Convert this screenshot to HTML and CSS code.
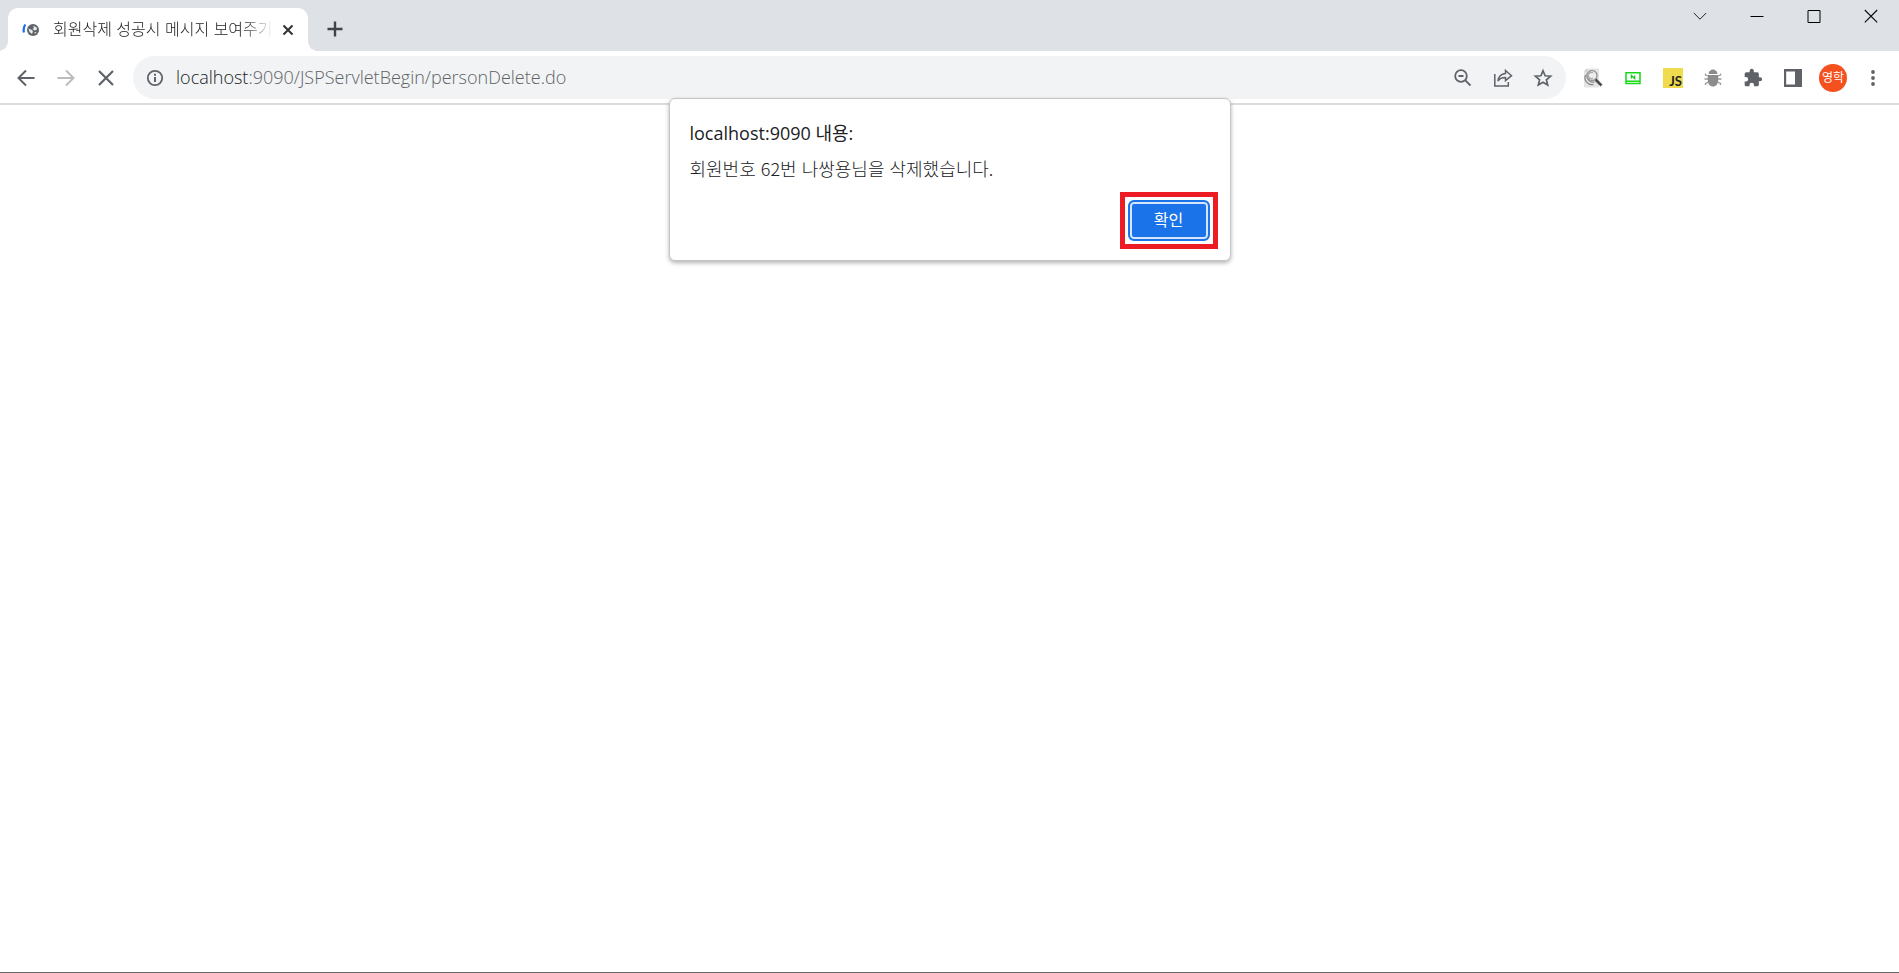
FILE: index.html
```
<!DOCTYPE html>
<html lang="ko">
<head>
<meta charset="utf-8">
<title>회원삭제 성공시 메시지 보여주기</title>
<link rel="stylesheet" href="styles.css">
</head>
<body>
<div class="browser">
  <header class="tab-strip">
    <div class="tab">
      <svg class="favicon" viewBox="0 0 18 14" aria-hidden="true">
        <path d="M3.300 1.500C1.600 4 1.300 6.500 1.900 9.500" fill="none" stroke="#1a6fe8" stroke-width="2.200"/>
        <circle cx="11" cy="7" r="6" fill="#5f6368"/>
        <path d="M6.500 5.500l3.500 1.500 1 1.500-1 2.500-2.500-2zM11 2.800l3.500 1.500.5 2.500-2.500.7-2-1.500 1.500-1zM12.500 9l2 .3-1.500 1.700z" fill="#e6e8ea"/>
      </svg>
      <span class="tab-title">회원삭제 성공시 메시지 보여주기</span>
      <button class="icon-button tab-close" type="button" aria-label="탭 닫기">
        <svg width="12" height="12" viewBox="0 0 12 12"><path d="M1.500 1.500l9 9m0-9l-9 9" stroke="#303236" stroke-width="2"/></svg>
      </button>
    </div>
    <button class="icon-button new-tab" type="button" aria-label="새 탭">
      <svg width="16" height="16" viewBox="0 0 16 16"><path d="M8 .5v15M.5 8h15" stroke="#404347" stroke-width="2.400"/></svg>
    </button>
    <div class="window-controls">
      <button class="icon-button" type="button" aria-label="탭 검색"><svg width="14" height="14" viewBox="0 0 14 14"><path d="M.8 4l6.200 6.200L13.200 4" fill="none" stroke="#222"/></svg></button>
      <button class="icon-button" type="button" aria-label="최소화"><svg width="14" height="14" viewBox="0 0 14 14"><path d="M.5 7.500h13" stroke="#000"/></svg></button>
      <button class="icon-button" type="button" aria-label="최대화"><svg width="14" height="14" viewBox="0 0 14 14"><path d="M1 1.500h12v12H1z" fill="none" stroke="#000"/></svg></button>
      <button class="icon-button" type="button" aria-label="닫기"><svg width="14" height="14" viewBox="0 0 14 14"><path d="M.8 1l12.400 12.400m0-12.400L.8 13.400" stroke="#111" stroke-width="1.200"/></svg></button>
    </div>
  </header>

  <nav class="toolbar">
    <div class="navigation">
      <button class="icon-button slot" type="button" aria-label="뒤로"><svg width="18" height="18" viewBox="0 0 18 18"><path d="M17.500 9H2M9 1.500L1.500 9 9 16.500" fill="none" stroke="#5f6368" stroke-width="2"/></svg></button>
      <button class="icon-button slot" type="button" aria-label="앞으로" disabled><svg width="18" height="18" viewBox="0 0 18 18"><path d="M.5 9H16M9 1.500L16.500 9 9 16.500" fill="none" stroke="#babcbe" stroke-width="2"/></svg></button>
      <button class="icon-button slot" type="button" aria-label="중지"><svg width="18" height="18" viewBox="0 0 18 18"><path d="M2 2l14 14m0-14L2 16" stroke="#5f6368" stroke-width="2.200"/></svg></button>
    </div>
    <div class="omnibox">
      <button class="icon-button site-info" type="button" aria-label="사이트 정보">
        <svg width="18" height="18" viewBox="0 0 18 18"><circle cx="9" cy="9" r="7.200" fill="none" stroke="#5f6368" stroke-width="1.800"/><path d="M9 8v5M9 4.800v2" stroke="#5f6368" stroke-width="2"/></svg>
      </button>
      <a class="url" href="#"><span class="host">localhost</span>:9090/JSPServletBegin/personDelete.do</a>
      <button class="icon-button slot" type="button" aria-label="축소"><svg width="20" height="20" viewBox="0 0 20 20"><g fill="none" stroke="#5f6368" stroke-width="1.800"><circle cx="8" cy="8" r="5.800"/><path d="M5.500 8h5M12.300 12.300l5.200 5.200"/></g></svg></button>
      <button class="icon-button slot" type="button" aria-label="공유"><svg width="20" height="20" viewBox="0 0 20 20"><g fill="none" stroke="#5f6368" stroke-width="1.500"><path d="M1.800 6v12h13.500V14"/><path d="M12.500 2.500l6 5.200-6 5v-3.200c-3.500-.1-6 1.100-7.500 3.500.4-4.200 3-7 7.500-7.500z"/></g></svg></button>
      <button class="icon-button slot" type="button" aria-label="북마크"><svg width="20" height="20" viewBox="0 0 20 20"><path d="M10 2.700l2.100 5.100 5.500.4-4.200 3.600 1.300 5.300L10 14.300l-4.700 2.800 1.300-5.300-4.200-3.600 5.500-.4z" fill="none" stroke="#5f6368" stroke-width="1.700"/></svg></button>
    </div>
    <div class="extensions">
      <button class="icon-button slot" type="button" aria-label="페이지 검사">
        <svg width="20" height="20" viewBox="0 0 20 20"><path d="M4 .5h12v19H1V3.500z" fill="#e4e4e4"/><path d="M4 .5v3H1z" fill="#c8c8c8"/><path d="M2.500 7a7 7 0 0 0 8 9.500M4.500 6a6 6 0 0 0 7 8" fill="none" stroke="#858585" stroke-width="1.200"/><circle cx="9" cy="7.500" r="5" fill="#eee" stroke="#999" stroke-width="1.400"/><path d="M10 5a3 3 0 1 0 0 5" fill="none" stroke="#aaa" stroke-width="1.300"/><path d="M12.500 11.500l6 6" stroke="#4b4b4b" stroke-width="2.600"/></svg>
      </button>
      <button class="icon-button slot" type="button" aria-label="화면 확장 프로그램">
        <svg width="16" height="14" viewBox="0 0 16 14"><path d="M1 1.800h14v10.700H1z" fill="#fff" stroke="#16d916" stroke-width="1.500"/><path d="M1 10.200h14" stroke="#16d916" stroke-width="1.500"/><path d="M6.400 7.500v-3l3.200 3v-3" fill="none" stroke="#10cc10" stroke-width="1.300"/></svg>
      </button>
      <button class="icon-button slot" type="button" aria-label="자바스크립트"><span class="js-badge">JS</span></button>
      <button class="icon-button slot" type="button" aria-label="디버그">
        <svg width="18" height="20" viewBox="0 0 18 20"><path d="M4.500 8L1.500 7V5.500M4 11H.5M4.500 14l-3 1.500V17M13.500 8l3-1V5.500M14 11h3.500M13.500 14l3 1.500V17" fill="none" stroke="#999" stroke-width="1.300"/><path d="M4.500 6C5 0 13 0 13.500 6z" fill="#8a8a8a"/><path d="M3.800 7h10.400v5c0 4-2.200 6.500-5.200 6.500S3.800 16 3.800 12z" fill="#8c8c8c"/></svg>
      </button>
      <button class="icon-button slot" type="button" aria-label="확장 프로그램">
        <svg width="20" height="20" viewBox="0 0 24 24"><path d="M20.500 11H19V7a2 2 0 0 0-2-2h-4V3.500a2.500 2.500 0 0 0-5 0V5H4a2 2 0 0 0-2 2v3.800h1.500a2.700 2.700 0 0 1 0 5.400H2V20a2 2 0 0 0 2 2h3.800v-1.500a2.700 2.700 0 0 1 5.400 0V22H17a2 2 0 0 0 2-2v-4h1.500a2.500 2.500 0 0 0 0-5z" fill="#5f6368"/></svg>
      </button>
      <button class="icon-button slot" type="button" aria-label="사이드 패널">
        <svg width="18" height="18" viewBox="0 0 18 18"><path d="M0 0h18v18H0zM2.200 2.500v13h8.800v-13z" fill="#5f6368" fill-rule="evenodd"/></svg>
      </button>
      <button class="icon-button slot" type="button"><span class="avatar">영학</span></button>
      <button class="icon-button slot" type="button" aria-label="메뉴"><svg width="4" height="18" viewBox="0 0 4 18"><g fill="#5f6368"><circle cx="2" cy="3" r="1.900"/><circle cx="2" cy="9" r="1.900"/><circle cx="2" cy="15" r="1.900"/></g></svg></button>
    </div>
  </nav>

  <main class="page">
    <dialog class="alert" open aria-labelledby="alert-title">
      <h1 class="alert-title" id="alert-title">localhost:9090 내용:</h1>
      <p class="alert-message">회원번호 62번 나쌍용님을 삭제했습니다.</p>
      <div class="alert-actions">
        <div class="highlight"><button class="confirm" type="button">확인</button></div>
      </div>
    </dialog>
  </main>
</div>
</body>
</html>
```
FILE: styles.css
```
* { box-sizing: border-box; }

body {
  margin: 0;
  font-family: "Open Sans", "Noto Sans CJK KR", sans-serif;
  color: #202124;
  background: #fff;
}

.browser {
  display: flex;
  flex-direction: column;
  min-height: 100vh;
  border-bottom: 1px solid #666;
}

.icon-button {
  display: flex;
  align-items: center;
  justify-content: center;
  flex: none;
  padding: 0;
  border: 0;
  background: none;
}

.slot { width: 40px; height: 40px; }

.tab-strip {
  display: flex;
  height: 51px;
  padding: 8px 0 0 8px;
  background: #dee1e6;
}

.tab {
  position: relative;
  display: flex;
  align-items: center;
  width: 300px;
  padding: 0 10px 0 14px;
  border-radius: 10px 10px 0 0;
  background: #fff;
}

.tab::before,
.tab::after {
  content: "";
  position: absolute;
  bottom: 0;
  width: 10px;
  height: 10px;
}

.tab::before {
  right: 100%;
  background: radial-gradient(circle at 0 0, #dee1e6 10px, #fff 10px);
}

.tab::after {
  left: 100%;
  background: radial-gradient(circle at 100% 0, #dee1e6 10px, #fff 10px);
}

.favicon { width: 18px; height: 14px; }

.tab-title {
  flex: 1;
  min-width: 0;
  margin-left: 13px;
  padding-bottom: 3px;
  overflow: hidden;
  font-family: "Noto Sans CJK KR", sans-serif;
  font-size: 16px;
  font-weight: 300;
  line-height: 24px;
  white-space: nowrap;
  mask-image: linear-gradient(to right, #000 190px, transparent 220px);
}

.tab-close { width: 20px; height: 20px; margin-left: 6px; }

.new-tab { width: 36px; height: 42px; margin-left: 9px; }

.window-controls {
  display: flex;
  height: 32px;
  margin: -8px 0 0 auto;
}

.window-controls .icon-button { width: 57px; }

.toolbar {
  display: flex;
  align-items: center;
  padding: 5px 6px 4px;
  border-bottom: 2px solid #dcdcdc;
}

.navigation, .extensions { display: flex; }

.omnibox {
  display: flex;
  flex: 1;
  align-items: center;
  height: 43px;
  margin: 0 7px;
  padding: 0 3px 0 13px;
  border-radius: 22px;
  background: #f1f3f4;
}

.url {
  flex: 1;
  margin-left: 12px;
  padding-bottom: 2px;
  font-size: 18px;
  font-weight: 300;
  line-height: 24px;
  color: #5f6368;
  text-decoration: none;
}

.site-info { width: 18px; height: 40px; }

.host { color: #202124; }

.js-badge {
  width: 20px;
  height: 20px;
  padding-top: 6px;
  padding-right: 1px;
  background: #f0db4f;
  font: bold 13px/14px Lato, sans-serif;
  text-align: right;
  color: #222;
}

.avatar {
  width: 28px;
  height: 28px;
  border-radius: 50%;
  background: #f4511e;
  font: 12px/26px "Noto Sans CJK KR", sans-serif;
  text-align: center;
  color: #fff;
}

.page { flex: 1; }

.alert {
  position: absolute;
  top: 98px;
  width: 562px;
  margin: 0 auto;
  padding: 21px 12px 11px 20px;
  border: 1px solid #c3c5c7;
  border-radius: 6px;
  background: #fff;
  color: #202124;
  box-shadow: 0 2px 4px rgba(0, 0, 0, 0.3);
}

.alert-title {
  margin: 0;
  font-size: 18px;
  font-weight: 400;
  line-height: 26px;
}

.alert-message {
  margin: 10px 0 12px;
  font-family: "Noto Sans CJK KR", sans-serif;
  font-size: 18px;
  font-weight: 300;
  line-height: 24px;
}

.alert-actions { display: flex; justify-content: flex-end; }

.highlight {
  padding: 3px;
  border: 5px solid #ed1c24;
}

.confirm {
  display: block;
  width: 82px;
  height: 41px;
  padding: 0 0 3px;
  border: 2px solid #1a73e8;
  border-radius: 6px;
  background: #1a73e8;
  box-shadow: inset 0 0 0 2px #d5e5fb;
  font: 16px/24px "Noto Sans CJK KR", sans-serif;
  color: #fff;
}
```
